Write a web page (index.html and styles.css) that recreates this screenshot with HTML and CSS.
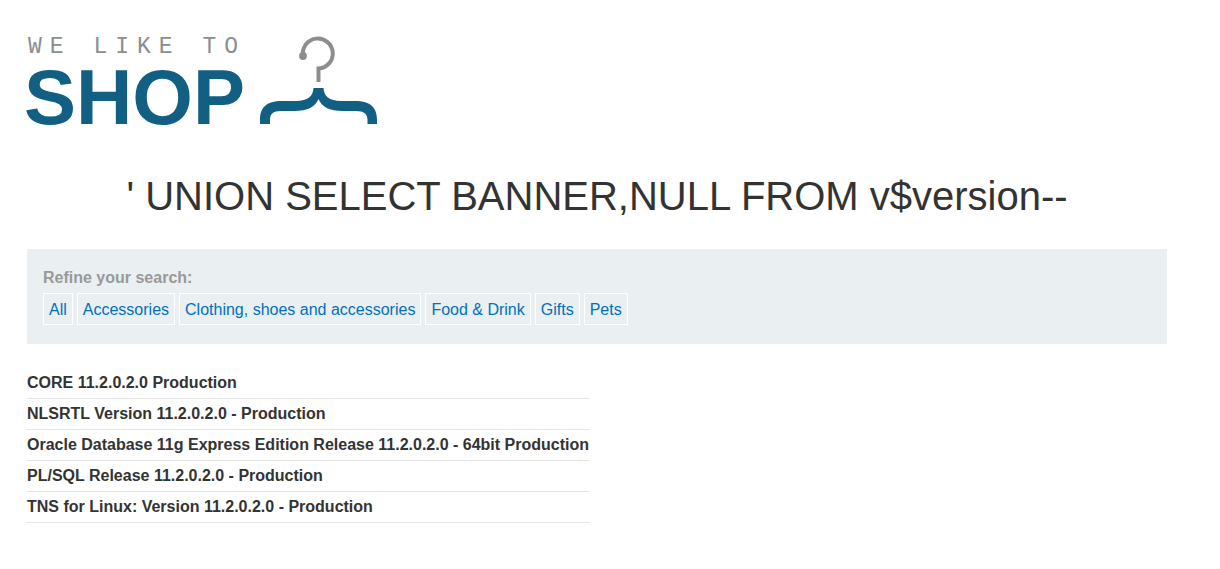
FILE: index.html
```html
<!DOCTYPE html>
<html lang="en">
<head>
<meta charset="utf-8">
<title>We Like to Shop</title>
<link rel="stylesheet" href="styles.css">
</head>
<body>
<main class="page">
  <header class="logo">
    <svg class="logo-art" width="354" height="92" viewBox="0 0 354 92" role="img" aria-label="We like to shop">
      <text class="logo-tagline" x="1" y="17">WE LIKE TO</text>
      <text class="logo-name" x="-3" y="88">SHOP</text>
      <path d="M276 20A15 15 0 1 1 291.500 32.500V46" fill="none" stroke="#8c8d8e" stroke-width="4"/>
      <circle cx="276" cy="20" r="3.900" fill="#8c8d8e"/>
      <path d="M286.500 52H296.500C297 60 302 65 314 65H328C344 65 350 72 350 84V88H340.500V84C340.500 78 337 75 329 75H316C302 75 295 71 291.500 63C288 71 281 75 267 75H254C246 75 243 78 243 84V88H233V84C233 72 239 65 255 65H269C281 65 286 60 286.500 52Z" fill="#125f84"/>
    </svg>
  </header>
  <h1 class="title">' UNION SELECT BANNER,NULL FROM v$version--</h1>
  <nav class="filters" aria-labelledby="filters-label">
    <span class="filters-label" id="filters-label">Refine your search:</span>
    <div class="filters-list">
      <a class="filter" href="#all">All</a>
      <a class="filter" href="#accessories">Accessories</a>
      <a class="filter" href="#clothing">Clothing, shoes and accessories</a>
      <a class="filter" href="#food">Food &amp; Drink</a>
      <a class="filter" href="#gifts">Gifts</a>
      <a class="filter" href="#pets">Pets</a>
    </div>
  </nav>
  <table class="results">
    <tbody>
      <tr><th scope="row">CORE 11.2.0.2.0 Production</th></tr>
      <tr><th scope="row">NLSRTL Version 11.2.0.2.0 - Production</th></tr>
      <tr><th scope="row">Oracle Database 11g Express Edition Release 11.2.0.2.0 - 64bit Production</th></tr>
      <tr><th scope="row">PL/SQL Release 11.2.0.2.0 - Production</th></tr>
      <tr><th scope="row">TNS for Linux: Version 11.2.0.2.0 - Production</th></tr>
    </tbody>
  </table>
</main>
</body>
</html>
```
FILE: styles.css
```css
body {
  margin: 0;
  background: #fff;
  color: #333332;
  font: 16px/24px "Liberation Sans", Arial, sans-serif;
}

.page {
  max-width: 1140px;
  margin: 0 auto;
  padding: 36px 53px 46px 27px;
}

.logo-art {
  display: block;
  overflow: visible;
}

.logo-tagline {
  fill: #8c8d8e;
  font: 23px "Liberation Mono", "Courier New", monospace;
  letter-spacing: 8px;
}

.logo-name {
  fill: #125f84;
  font: bold 78px "Liberation Sans", Arial, sans-serif;
}

.title {
  margin: 44px 0 28px;
  font-size: 40px;
  line-height: 49px;
  font-weight: 400;
  text-align: center;
}

.filters {
  padding: 17px 16px 19px;
  background: #eaeff2;
}

.filters-label {
  display: block;
  margin-bottom: 3px;
  color: #999;
  font-weight: 700;
}

.filters-list {
  display: flex;
  flex-wrap: wrap;
  gap: 4px;
}

.filter {
  padding: 4px 5px 2px;
  border: 1px solid #fff;
  line-height: 24px;
  color: #0071bc;
  text-decoration: none;
}

.results {
  margin-top: 24px;
  border-collapse: separate;
  border-spacing: 0;
}

.results th {
  padding: 3px 0;
  border-bottom: 1px solid #e4e4e4;
  text-align: left;
}
```
